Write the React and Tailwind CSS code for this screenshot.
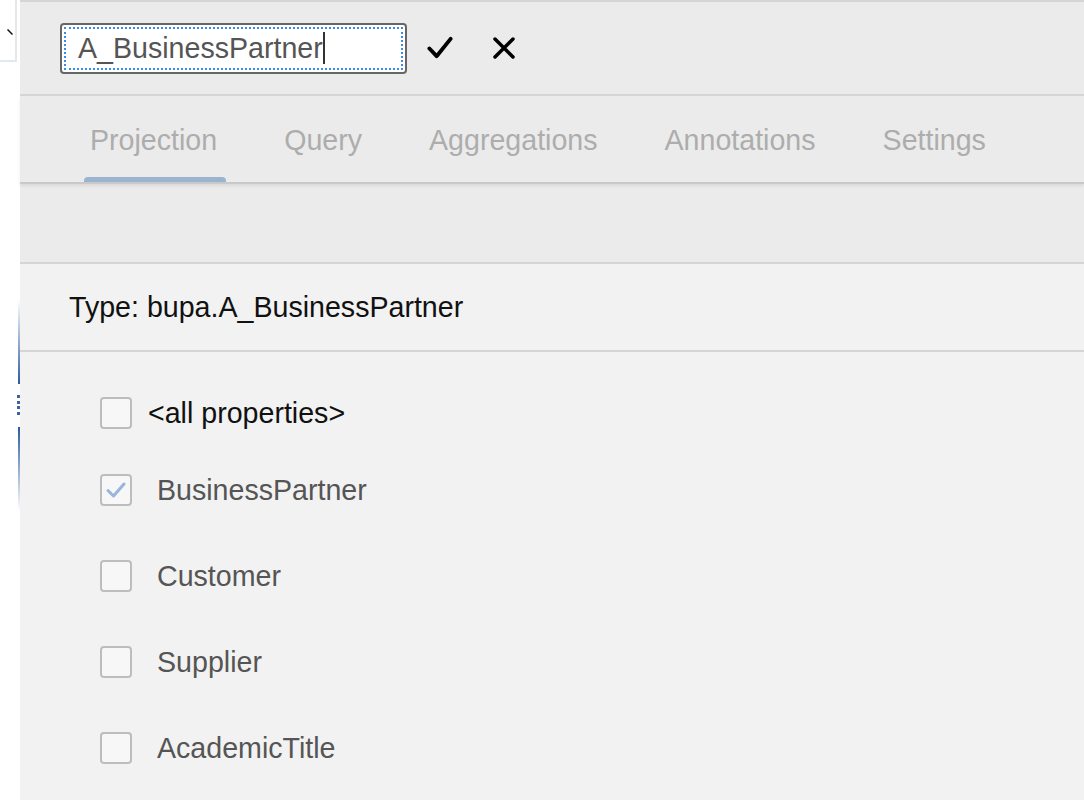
import React from "react";

const tabs = ["Projection", "Query", "Aggregations", "Annotations", "Settings"];

const properties = [
  { name: "BusinessPartner", checked: true, mt: "mt-[45px]" },
  { name: "Customer", checked: false, mt: "mt-[54px]" },
  { name: "Supplier", checked: false, mt: "mt-[54px]" },
  { name: "AcademicTitle", checked: false, mt: "mt-[54px]" },
];

function Checkbox({ checked }) {
  return (
    <div className="w-[32px] h-[32px] shrink-0 rounded-[4px] border-2 border-[#bdbdbd] bg-[#f7f7f7] flex items-center justify-center">
      {checked && (
        <svg width="22" height="18" viewBox="0 0 22 18" fill="none">
          <path
            d="M3 9.5L8.5 15L19 3"
            stroke="#9ab5dc"
            strokeWidth="3"
            strokeLinecap="round"
            strokeLinejoin="round"
          />
        </svg>
      )}
    </div>
  );
}

function LeftStrip() {
  return (
    <div className="w-[20px] shrink-0 bg-white flex flex-col">
      <div className="w-[17px] h-[62px] border-r-2 border-b-2 border-[#e3e8ee] flex items-start justify-end pr-[2px] pt-[29px]">
        <svg width="6" height="6" viewBox="0 0 6 6">
          <path d="M0.5 0.5L5.5 5.5" stroke="#111" strokeWidth="1.5" />
        </svg>
      </div>
      <div className="ml-[18px] mt-[238px] w-[2px] h-[84px] bg-gradient-to-b from-transparent to-[#2c5aa0]" />
      <div className="ml-[17px] mt-[11px] flex flex-col gap-[2.5px]">
        <div className="w-[3px] h-[3px] bg-[#3d6598]" />
        <div className="w-[3px] h-[3px] bg-[#3d6598]" />
        <div className="w-[3px] h-[3px] bg-[#3d6598]" />
        <div className="w-[3px] h-[3px] bg-[#3d6598]" />
      </div>
      <div className="ml-[18px] mt-[12px] w-[2px] h-[84px] bg-gradient-to-b from-[#2c5aa0] to-transparent" />
    </div>
  );
}

export default function App() {
  return (
    <div
      className="w-[1084px] h-[800px] flex overflow-hidden bg-white"
      style={{ fontFamily: '"Liberation Sans", Arial, sans-serif' }}
    >
      <LeftStrip />

      <div className="flex-1 flex flex-col bg-[#f2f2f2]">
        {/* header with rename input */}
        <div className="h-[96px] shrink-0 bg-[#ebebeb] border-t-2 border-b-2 border-[#d5d5d5] flex items-center pl-[40px]">
          <div className="w-[347px] h-[51px] rounded-[4px] border-2 border-[#666] bg-white p-[2px]">
            <div className="h-full w-full outline-2 outline-dotted outline-[#3b8ae6] -outline-offset-2 flex items-center pl-[14px]">
              <span className="text-[28.6px] text-[#555] leading-none">A_BusinessPartner</span>
              <span className="w-[2px] h-[32px] bg-[#333]" />
            </div>
          </div>
          <button className="ml-[20px] w-[26px] h-[26px] flex items-center justify-center">
            <svg width="27" height="24" viewBox="0 0 27 24" fill="none">
              <path
                d="M2.5 12.5L10 20.5L24.5 2.5"
                stroke="#000"
                strokeWidth="4"
                strokeLinecap="round"
                strokeLinejoin="round"
              />
            </svg>
          </button>
          <button className="ml-[39px] w-[24px] h-[24px] flex items-center justify-center">
            <svg width="22" height="22" viewBox="0 0 22 22" fill="none">
              <path
                d="M2 2L20 20M20 2L2 20"
                stroke="#000"
                strokeWidth="3.5"
                strokeLinecap="round"
              />
            </svg>
          </button>
        </div>

        {/* tabs */}
        <div className="h-[88px] shrink-0 bg-[#ebebeb] border-b-2 border-[#c9c9c9] shadow-[0_2px_3px_rgba(0,0,0,0.08)] relative z-10 flex pl-[64px] gap-[55px]">
          {tabs.map((tab, i) => (
            <div key={tab} className="flex flex-col justify-between">
              <div className="pt-[28px] px-[6px] text-[28.6px] leading-[32px] text-[#adadad]">{tab}</div>
              <div className={i === 0 ? "h-[5px] -mr-[3px] rounded-t-[4px] bg-[#9ab3cf]" : "h-[5px]"} />
            </div>
          ))}
        </div>

        <div className="h-[80px] shrink-0 bg-[#ebebeb] border-b-2 border-[#d5d5d5]" />

        <div className="h-[88px] shrink-0 border-b-2 border-[#d5d5d5] flex items-center pl-[49px]">
          <span className="text-[28.6px] text-[#111]">Type: bupa.A_BusinessPartner</span>
        </div>

        {/* property list */}
        <div className="flex flex-col pl-[80px]">
          <div className="mt-[45px] flex items-center gap-[16px]">
            <Checkbox checked={false} />
            <span className="text-[28.6px] leading-[32px] text-[#111]">&lt;all properties&gt;</span>
          </div>
          {properties.map((p) => (
            <div key={p.name} className={`${p.mt} flex items-center gap-[25px]`}>
              <Checkbox checked={p.checked} />
              <span className="text-[28.6px] leading-[32px] text-[#555]">{p.name}</span>
            </div>
          ))}
        </div>
      </div>
    </div>
  );
}
